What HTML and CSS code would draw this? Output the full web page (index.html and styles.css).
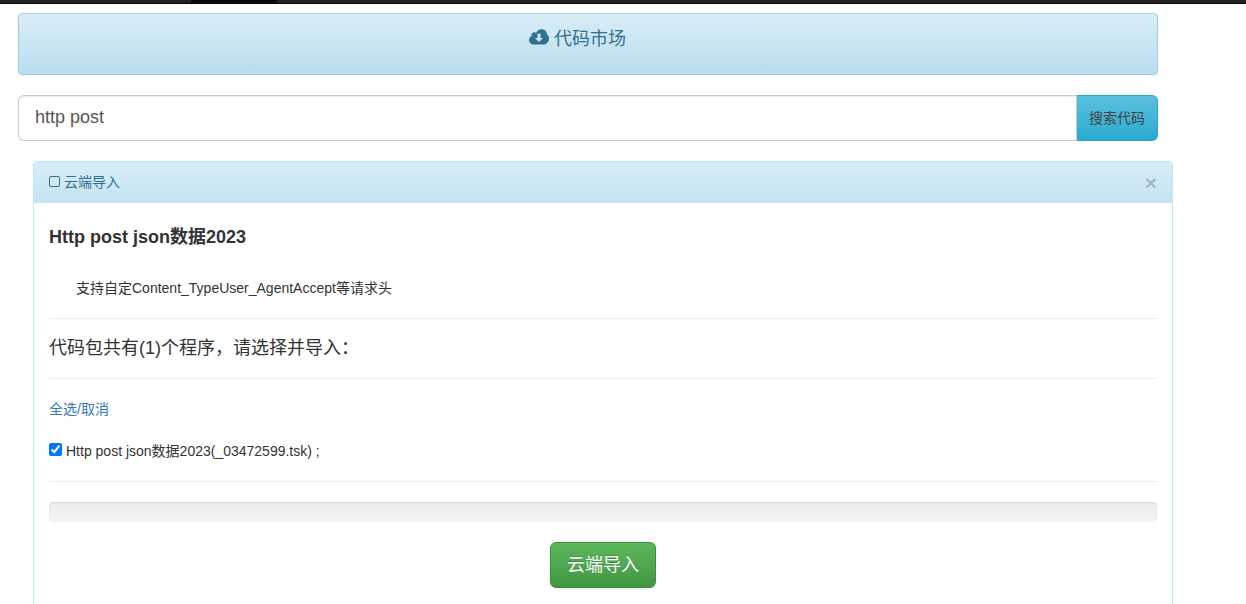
FILE: index.html
```html
<!DOCTYPE html>
<html lang="zh-CN">
<head>
<meta charset="utf-8">
<title>代码市场</title>
<link rel="stylesheet" href="styles.css">
</head>
<body>
<div class="topbar"><div class="topbar-active"></div></div>
<main class="page">
  <div class="market-alert">
    <svg class="cloud-icon" viewBox="0 0 20 16" aria-hidden="true"><path fill-rule="evenodd" d="M4.500 15.500C2 15.500 0 13.600 0 11.200c0-1.800 1-3.300 2.500-4C2.400 6.900 2.400 6.600 2.400 6.300c0-1.700 1.400-3 3.100-3 .6 0 1.200.2 1.700.5C8.200 1.600 10.300.2 12.600.2c3 0 5.400 2.300 5.500 5.300 1.200.8 1.900 2.200 1.900 3.900 0 3.400-2.700 6.100-6 6.100H4.500zM8.500 4.800v4.100H6L10 12.900l4-4H11.500V4.800H8.500z"/></svg>
    <span>代码市场</span>
  </div>
  <form class="search-group">
    <input class="search-input" type="text" value="http post">
    <button class="search-btn" type="button">搜索代码</button>
  </form>
  <section class="panel">
    <header class="panel-head">
      <span class="panel-title"><span class="square-icon"></span>云端导入</span>
      <span class="panel-close">×</span>
    </header>
    <div class="panel-body">
      <h4 class="pkg-title">Http post json数据2023</h4>
      <p class="pkg-desc">支持自定Content_TypeUser_AgentAccept等请求头</p>
      <hr class="rule">
      <div class="pkg-count">代码包共有(1)个程序，请选择并导入：</div>
      <hr class="rule">
      <a class="toggle-all" href="#">全选/取消</a>
      <label class="prog-item"><input class="prog-check" type="checkbox" checked>Http post json数据2023(_03472599.tsk) ;</label>
      <hr class="rule">
      <div class="progress"></div>
      <div class="actions"><button class="import-btn" type="button">云端导入</button></div>
    </div>
  </section>
</main>
</body>
</html>
```
FILE: styles.css
```css
* { box-sizing: border-box; }
html, body { height: 604px; overflow: hidden; }
body {
  margin: 0;
  background: #fff;
  color: #333;
  font-family: "Liberation Sans", "Noto Sans CJK SC", sans-serif;
  font-size: 14px;
  line-height: 20px;
}
.topbar {
  height: 4px;
  background: #222;
  border-bottom: 1px solid #080808;
}
.topbar-active { width: 86px; height: 3px; margin-left: 191px; background: #080808; }
.page {
  width: 1173px;
  padding: 9px 0 0 18px;
}
.market-alert {
  width: 1140px;
  height: 62px;
  padding: 14px 21px 0 0;
  display: flex;
  justify-content: center;
  align-items: flex-start;
  gap: 5px;
  border: 1px solid #9acfea;
  border-radius: 4px;
  background: linear-gradient(to bottom, #d9edf7 0, #b9def0 100%);
  color: #31708f;
  font-size: 18px;
  line-height: 22px;
  box-shadow: inset 0 1px 0 rgba(255,255,255,.25), 0 1px 2px rgba(0,0,0,.05);
}
.cloud-icon { width: 20px; height: 16px; margin-top: 1px; fill: #31708f; }
.search-group {
  display: flex;
  width: 1140px;
  height: 46px;
  margin: 20px 0 20px;
}
.search-input {
  flex: 1;
  min-width: 0;
  height: 46px;
  padding: 0 16px 2px;
  border: 1px solid #ccc;
  border-right: 0;
  border-radius: 6px 0 0 6px;
  background: #fff;
  color: #555;
  font: 18px "Liberation Sans", "Noto Sans CJK SC", sans-serif;
  box-shadow: inset 0 1px 1px rgba(0,0,0,.075);
  outline: none;
}
.search-btn {
  width: 82px;
  height: 46px;
  padding: 0 0 2px;
  border: 1px solid #28a4c9;
  border-left: 1px solid #ccc;
  border-radius: 0 6px 6px 0;
  background: linear-gradient(to bottom, #5bc0de 0, #2aabd2 100%);
  color: #444;
  font: 14px "Liberation Sans", "Noto Sans CJK SC", sans-serif;
}
.panel {
  width: 1140px;
  height: 460px;
  margin-left: 15px;
  border: 1px solid #bce8f1;
  border-radius: 4px;
  background: #fff;
}
.panel-head {
  display: flex;
  justify-content: space-between;
  align-items: center;
  height: 41px;
  padding: 0 15px;
  border-radius: 3px 3px 0 0;
  background: linear-gradient(to bottom, #d9edf7 0, #c4e3f3 100%);
  color: #31708f;
}
.panel-title { display: flex; align-items: center; padding-bottom: 2px; }
.square-icon {
  width: 11px;
  height: 11px;
  margin-right: 4px;
  border: 1px solid #31708f;
  border-radius: 2px;
}
.panel-close {
  color: #000;
  opacity: .2;
  font-size: 21px;
  font-weight: bold;
  line-height: 21px;
}
.panel-body { padding: 24px 15px 0; }
.pkg-title {
  margin: 0;
  font-size: 18px;
  font-weight: bold;
  line-height: 20px;
}
.pkg-desc { margin: 31px 0 0; padding-left: 27px; line-height: 20px; }
.rule { height: 1px; margin: 20px 0 0; border: 0; background: #eee; }
.pkg-count { margin-top: 19px; font-size: 18px; line-height: 20px; }
.pkg-count + .rule { margin-top: 20px; }
.toggle-all { display: block; margin-top: 20px; color: #337ab7; text-decoration: none; }
.prog-item { display: flex; align-items: center; margin-top: 22px; line-height: 20px; }
.prog-check { width: 13px; height: 13px; margin: 0 4px 0 0; position: relative; top: -2px; }
.prog-item + .rule { margin-top: 20px; }
.progress {
  height: 20px;
  margin-top: 20px;
  border-radius: 4px;
  background: linear-gradient(to bottom, #ebebeb 0, #f5f5f5 100%);
  box-shadow: inset 0 1px 2px rgba(0,0,0,.1);
}
.actions { display: flex; justify-content: center; margin-top: 20px; }
.import-btn {
  width: 106px;
  height: 46px;
  padding: 0 0 4px;
  border: 1px solid #3e8f3e;
  border-radius: 6px;
  background: linear-gradient(to bottom, #5cb85c 0, #419641 100%);
  color: #fff;
  font: 18px "Liberation Sans", "Noto Sans CJK SC", sans-serif;
  text-shadow: 0 -1px 0 rgba(0,0,0,.2);
}
```
